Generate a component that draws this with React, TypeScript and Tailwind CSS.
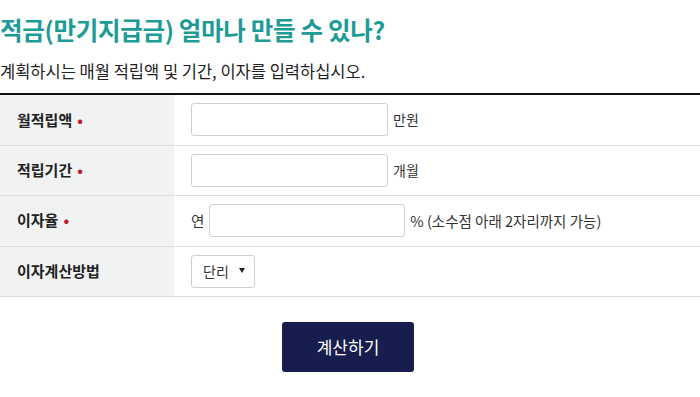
import React, { useState } from "react";

const font = { fontFamily: '"Noto Sans CJK KR", "Noto Sans", sans-serif' };

function Label({ text, required }: { text: string; required?: boolean }) {
  return (
    <th className="w-[174px] bg-[#f1f2f2] pl-[17px] text-left align-middle text-[15px] font-bold text-[#222]">
      {text}
      {required && <span className="ml-[5px] text-[#c0182a]">•</span>}
    </th>
  );
}

export default function App() {
  const [method, setMethod] = useState("단리");

  return (
    <div className="h-[397px] w-[700px] bg-white pt-[12px]" style={font}>
      <h2 className="text-[24.5px] font-bold leading-[36px] tracking-[-0.3px] text-[#1d9b95]">
        적금(만기지급금) 얼마나 만들 수 있나?
      </h2>
      <p className="mt-[11px] text-[16.5px] leading-[24px] text-[#222]">
        계획하시는 매월 적립액 및 기간, 이자를 입력하십시오.
      </p>

      <table className="mt-[10px] w-full border-collapse border-t-2 border-[#111]">
        <tbody>
          <tr className="h-[51px] border-b border-[#dedede]">
            <Label text="월적립액" required />
            <td className="pl-[17px]">
              <div className="flex items-center gap-[5px] text-[14px] text-[#333]">
                <input className="h-[33px] w-[197px] rounded-[3px] border border-[#cfcfcf] px-2 outline-none" />
                <span>만원</span>
              </div>
            </td>
          </tr>
          <tr className="h-[50px] border-b border-[#dedede]">
            <Label text="적립기간" required />
            <td className="pl-[17px]">
              <div className="flex items-center gap-[5px] text-[14px] text-[#333]">
                <input className="h-[33px] w-[197px] rounded-[3px] border border-[#cfcfcf] px-2 outline-none" />
                <span>개월</span>
              </div>
            </td>
          </tr>
          <tr className="h-[51px] border-b border-[#dedede]">
            <Label text="이자율" required />
            <td className="pl-[17px]">
              <div className="flex items-center text-[14.5px] text-[#333]">
                <span className="mr-[5px]">연</span>
                <input className="h-[33px] w-[196px] rounded-[3px] border border-[#cfcfcf] px-2 outline-none" />
                <span className="ml-[5px]">% (소수점 아래 2자리까지 가능)</span>
              </div>
            </td>
          </tr>
          <tr className="h-[50px] border-b border-[#dedede]">
            <Label text="이자계산방법" />
            <td className="pl-[17px]">
              <div className="relative h-[33px] w-[64px]">
                <select
                  value={method}
                  onChange={(e) => setMethod(e.target.value)}
                  className="h-full w-full appearance-none rounded-[3px] border border-[#cfcfcf] bg-white pl-[11px] text-[14px] text-[#333] outline-none"
                >
                  <option>단리</option>
                  <option>복리</option>
                </select>
                <span className="pointer-events-none absolute right-[10px] top-[13px] h-0 w-0 border-x-[3.5px] border-t-[5px] border-x-transparent border-t-[#222]" />
              </div>
            </td>
          </tr>
        </tbody>
      </table>

      <div className="mt-[25px] flex justify-center pr-[4px]">
        <button className="h-[50px] w-[132px] rounded-[3px] bg-[#171d4c] text-[17px] text-white">
          계산하기
        </button>
      </div>
    </div>
  );
}
